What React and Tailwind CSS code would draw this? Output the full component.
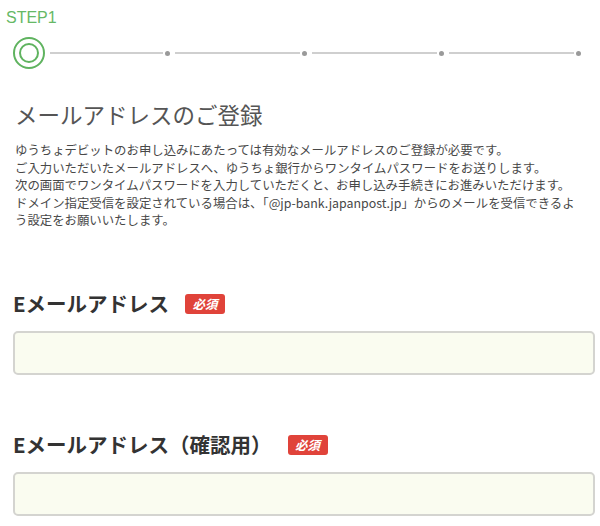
import React from 'react';

const lines = [
  'ゆうちょデビットのお申し込みにあたっては有効なメールアドレスのご登録が必要です。',
  'ご入力いただいたメールアドレスへ、ゆうちょ銀行からワンタイムパスワードをお送りします。',
  '次の画面でワンタイムパスワードを入力していただくと、お申し込み手続きにお進みいただけます。',
  'ドメイン指定受信を設定されている場合は、「@jp-bank.japanpost.jp」からのメールを受信できるよ',
  'う設定をお願いいたします。',
];

function Required() {
  return (
    <span className="ml-[16px] mt-[3px] inline-flex h-[20px] w-[40px] items-center justify-center rounded-[3px] bg-[#e0433a] text-[12.5px] font-bold italic leading-none text-white">
      必須
    </span>
  );
}

function Field({ label, className }) {
  return (
    <div className={className}>
      <div className="flex items-center">
        <span className="text-[20.5px] font-bold leading-[28px] text-[#333]">{label}</span>
        <Required />
      </div>
      <input
        type="email"
        className="mt-[14px] block h-[44px] w-[582px] rounded-[5px] border-2 border-[#d4d4d0] bg-[#fafcf0] px-3 outline-none"
      />
    </div>
  );
}

export default function App() {
  return (
    <div
      className="h-[526px] w-[600px] overflow-hidden bg-white"
      style={{ fontFamily: '"Noto Sans CJK JP", "Liberation Sans", sans-serif' }}
    >
      {/* --- STEPPER --- */}
      <div className="pt-[8px]">
        <div
          className="pl-[6px] text-[16px] font-light leading-[20px] text-[#66b866]"
          style={{ fontFamily: '"Liberation Sans", sans-serif' }}
        >
          STEP1
        </div>
        <div className="mt-[9px] flex items-center pl-[13px]">
          <div className="flex h-[32px] w-[32px] shrink-0 items-center justify-center rounded-full border-2 border-[#5fb35f]">
            <div className="h-[20px] w-[20px] rounded-full border-2 border-[#5fb35f]" />
          </div>
          {[0, 1, 2, 3].map((i) => (
            <div key={i} className={`flex items-center ${i === 0 ? 'w-[125px]' : 'w-[137px]'}`}>
              <div className="ml-[5px] mr-[2px] h-[2px] flex-1 bg-[#cfcfcf]" />
              <div className="h-[5px] w-[5px] rounded-full bg-[#9a9a9a]" />
            </div>
          ))}
        </div>
      </div>

      {/* --- INTRO --- */}
      <h1 className="mt-[30px] pl-[15px] text-[22.5px] font-normal leading-[30px] text-[#555]">
        メールアドレスのご登録
      </h1>
      <div className="mt-[13px] pl-[15px] text-[12.4px] leading-[17.5px] text-[#484848]">
        {lines.map((l) => (
          <div key={l} className="whitespace-nowrap">{l}</div>
        ))}
      </div>

      {/* --- FORM --- */}
      <div className="pl-[13px]">
        <Field label="Eメールアドレス" className="mt-[59px]" />
        <Field label="Eメールアドレス（確認用）" className="mt-[55px]" />
      </div>
    </div>
  );
}
